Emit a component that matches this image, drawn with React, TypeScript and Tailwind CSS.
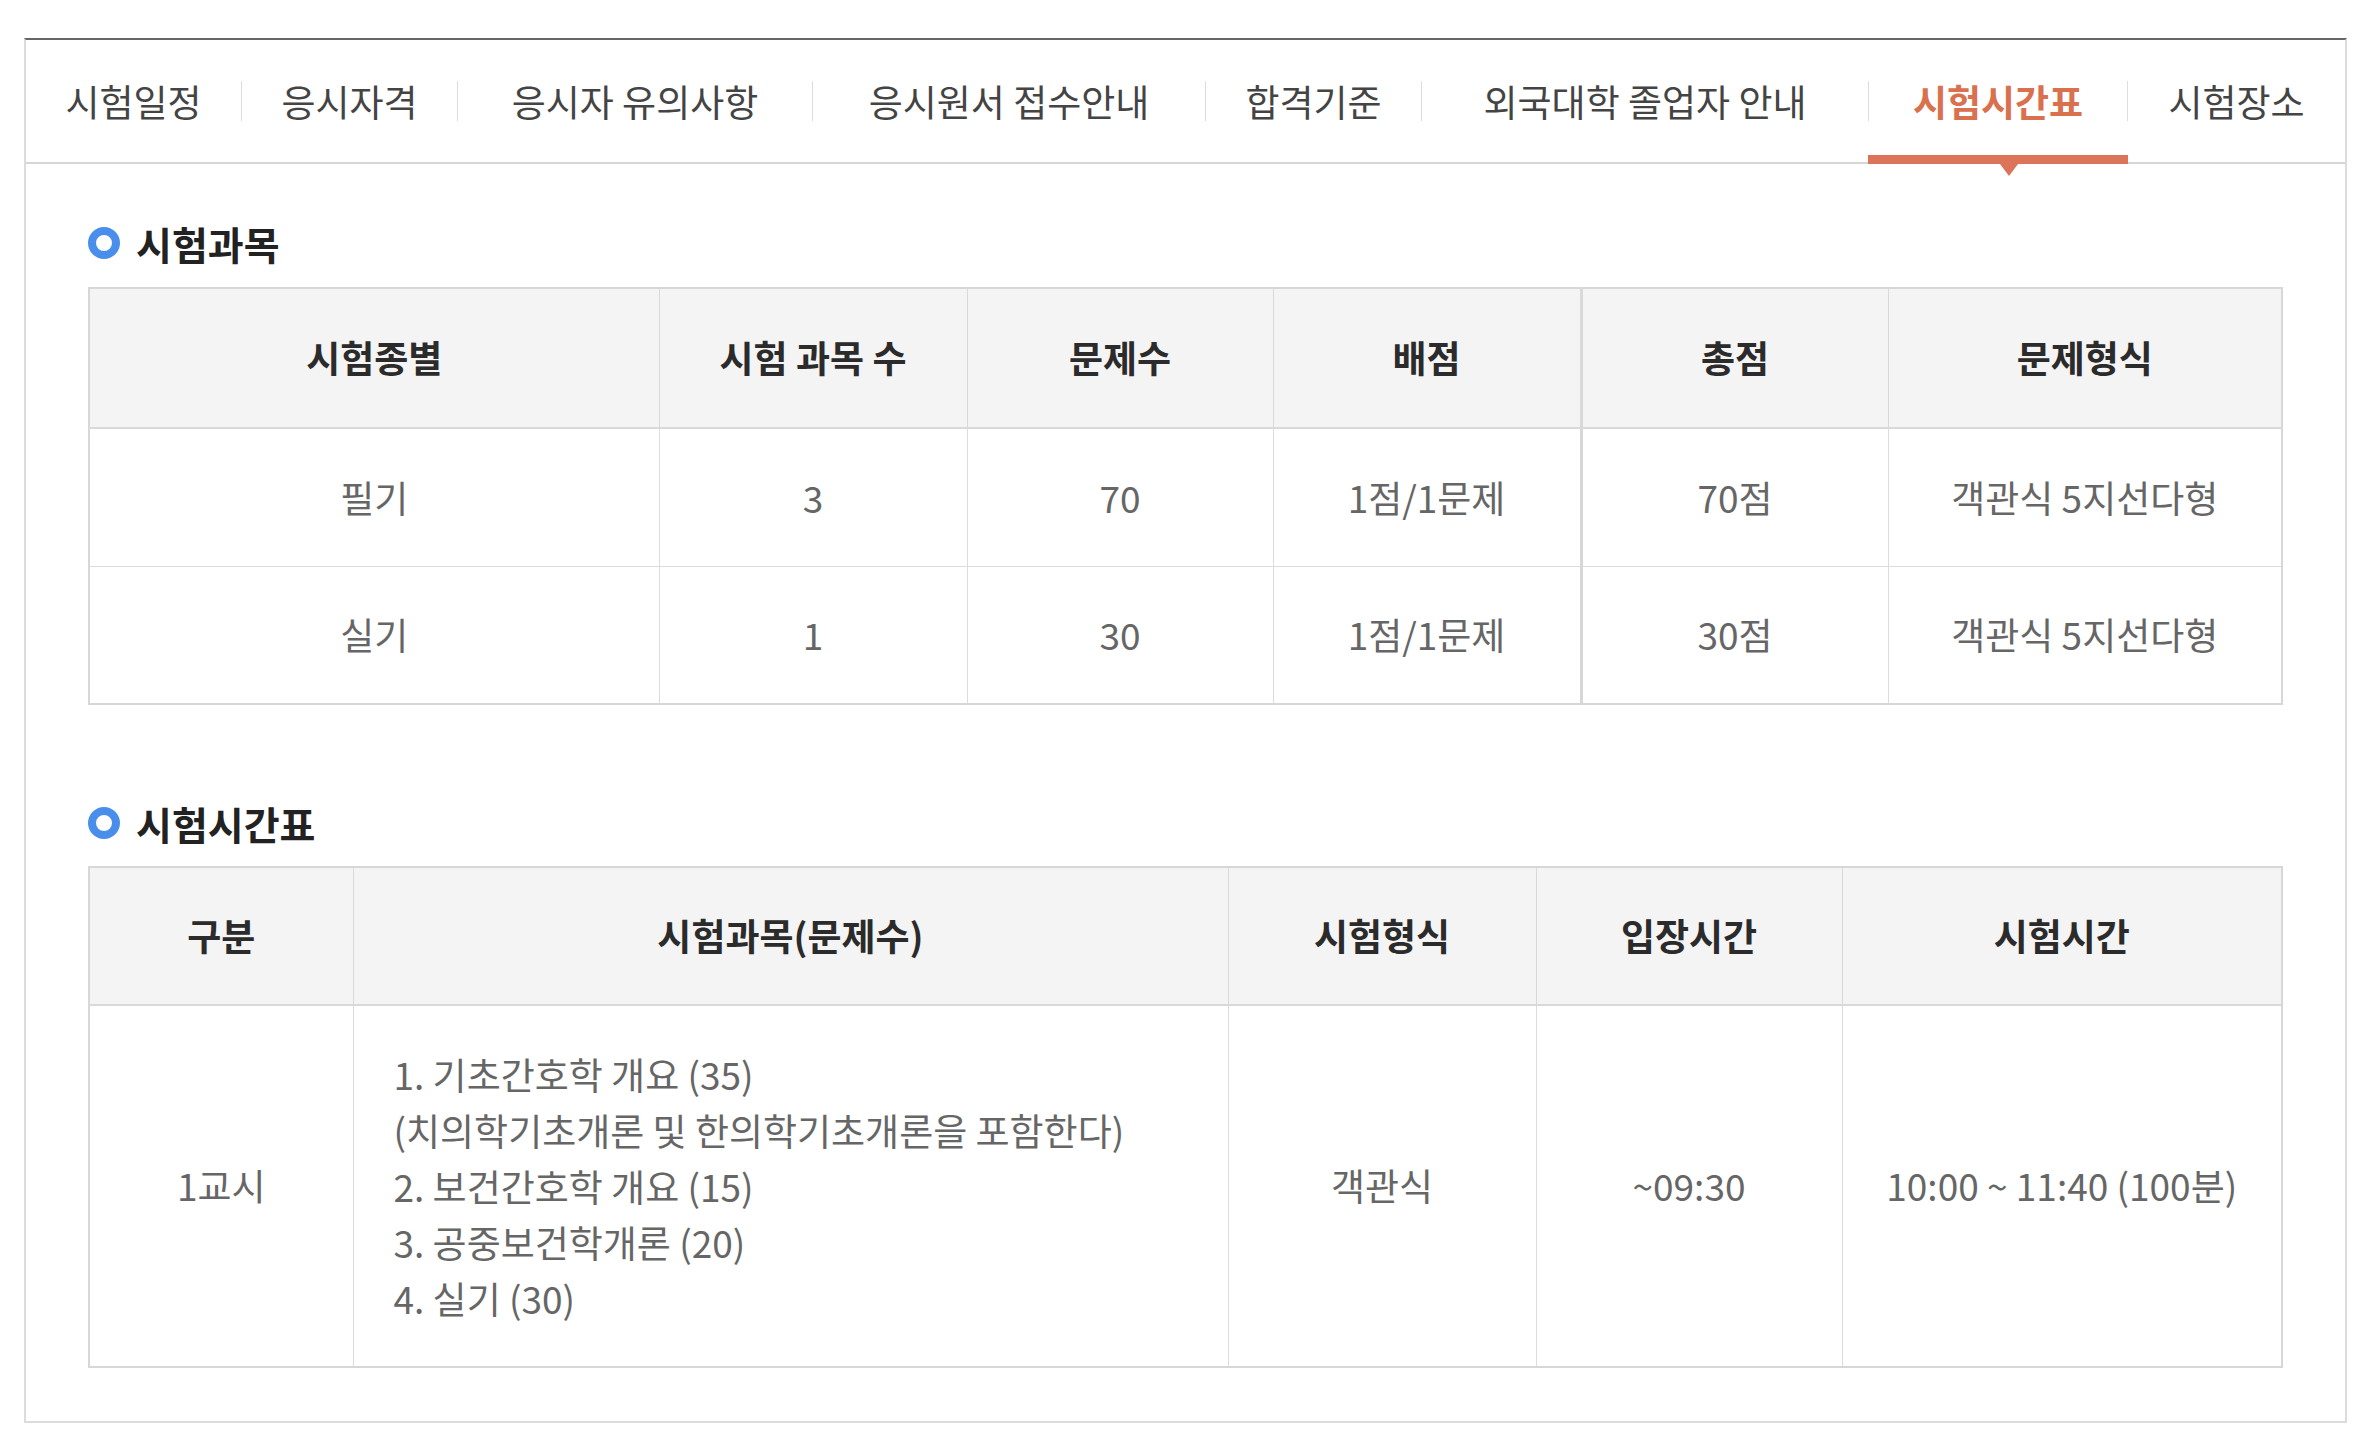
import type { ReactNode } from 'react';

const tabs = [
  { label: '시험일정', w: 'w-[215px]' },
  { label: '응시자격', w: 'w-[215px]' },
  { label: '응시자 유의사항', w: 'w-[354px]' },
  { label: '응시원서 접수안내', w: 'w-[392px]' },
  { label: '합격기준', w: 'w-[215px]' },
  { label: '외국대학 졸업자 안내', w: 'w-[446px]' },
  { label: '시험시간표', w: 'w-[258px]', active: true },
  { label: '시험장소', w: 'flex-1' },
];

const subjectRows = [
  { type: '필기', count: '3', questions: '70', score: '1점/1문제', total: '70점', format: '객관식 5지선다형' },
  { type: '실기', count: '1', questions: '30', score: '1점/1문제', total: '30점', format: '객관식 5지선다형' },
];

function SectionTitle({ children, className = '' }: { children: ReactNode; className?: string }) {
  return (
    <div className={`flex items-center gap-[16px] h-[38px] ${className}`}>
      <span className="w-[32px] h-[32px] shrink-0 rounded-full border-[8px] border-[#4a8eec]" />
      <h3 className="text-[39px] leading-none font-bold text-[#222]">{children}</h3>
    </div>
  );
}

export default function App() {
  return (
    <div className="font-['Noto_Sans_CJK_KR','Noto_Sans',sans-serif] bg-white pt-[38px] pl-[24px] pb-[15px]">
      <div className="w-[2323px] border-t-2 border-t-[#666] border-x-2 border-b-2 border-x-[#dcdcdc] border-b-[#dcdcdc]">
        {/* Tabs */}
        <div className="flex items-center h-[124px] border-b-2 border-[#d6d6d6]">
          {tabs.map((tab, i) => (
            <div key={tab.label} className={`flex items-center h-full ${tab.w === 'flex-1' ? 'flex-1' : ''}`}>
              {i > 0 && <span className="w-px h-[40px] bg-[#dddddd] shrink-0" />}
              <div className={`relative flex items-center justify-center h-full ${tab.w === 'flex-1' ? 'flex-1' : tab.w}`}>
                <span
                  className={`text-[37px] leading-none whitespace-nowrap ${
                    tab.active ? 'font-bold text-[#d9714f]' : 'text-[#444]'
                  }`}
                >
                  {tab.label}
                </span>
                {tab.active && (
                  <span className="absolute left-[-1px] right-[-1px] bottom-[-2px] h-[9px] bg-[#dc7459]">
                    <span className="absolute top-full left-[calc(50%+11px)] -translate-x-1/2 w-0 h-0 border-x-[9px] border-x-transparent border-t-[12px] border-t-[#dc7459]" />
                  </span>
                )}
              </div>
            </div>
          ))}
        </div>

        <div className="pl-[62px] pb-[53px]">
          {/* 시험과목 */}
          <SectionTitle className="mt-[60px]">시험과목</SectionTitle>
          <table className="mt-[25px] w-[2193px] table-fixed border-collapse border-2 border-[#d7d7d7] text-[37px]">
            <colgroup>
              <col className="w-[570px]" />
              <col className="w-[308px]" />
              <col className="w-[306px]" />
              <col className="w-[308px]" />
              <col className="w-[307px]" />
              <col className="w-[394px]" />
            </colgroup>
            <thead>
              <tr className="h-[140px] bg-[#f4f4f4] text-[#2b2b2b]">
                <th className="border border-[#d9d9d9] border-b-2 font-bold">시험종별</th>
                <th className="border border-[#d9d9d9] border-b-2 font-bold">시험 과목 수</th>
                <th className="border border-[#d9d9d9] border-b-2 font-bold">문제수</th>
                <th className="border border-[#d9d9d9] border-b-2 font-bold">배점</th>
                <th className="border border-[#d9d9d9] border-b-2 border-l-[3px] font-bold">총점</th>
                <th className="border border-[#d9d9d9] border-b-2 font-bold">문제형식</th>
              </tr>
            </thead>
            <tbody className="text-[#666] text-center">
              {subjectRows.map((row) => (
                <tr key={row.type} className="h-[138px]">
                  <td className="border border-[#dcdcdc]">{row.type}</td>
                  <td className="border border-[#dcdcdc]">{row.count}</td>
                  <td className="border border-[#dcdcdc]">{row.questions}</td>
                  <td className="border border-[#dcdcdc]">{row.score}</td>
                  <td className="border border-[#dcdcdc] border-l-[3px] border-l-[#d7d7d7]">{row.total}</td>
                  <td className="border border-[#dcdcdc]">{row.format}</td>
                </tr>
              ))}
            </tbody>
          </table>

          {/* 시험시간표 */}
          <SectionTitle className="mt-[99px]">시험시간표</SectionTitle>
          <table className="mt-[24px] w-[2193px] table-fixed border-collapse border-2 border-[#d7d7d7] text-[37px]">
            <colgroup>
              <col className="w-[264px]" />
              <col className="w-[875px]" />
              <col className="w-[308px]" />
              <col className="w-[306px]" />
              <col className="w-[440px]" />
            </colgroup>
            <thead>
              <tr className="h-[138px] bg-[#f4f4f4] text-[#2b2b2b]">
                <th className="border border-[#d9d9d9] border-b-2 font-bold">구분</th>
                <th className="border border-[#d9d9d9] border-b-2 font-bold">시험과목(문제수)</th>
                <th className="border border-[#d9d9d9] border-b-2 font-bold">시험형식</th>
                <th className="border border-[#d9d9d9] border-b-2 font-bold">입장시간</th>
                <th className="border border-[#d9d9d9] border-b-2 font-bold">시험시간</th>
              </tr>
            </thead>
            <tbody className="text-[#666] text-center">
              <tr className="h-[362px]">
                <td className="border border-[#dcdcdc]">1교시</td>
                <td className="border border-[#dcdcdc] px-[40px] text-left leading-[56px]">
                  <p>1. 기초간호학 개요 (35)</p>
                  <p>(치의학기초개론 및 한의학기초개론을 포함한다)</p>
                  <p>2. 보건간호학 개요 (15)</p>
                  <p>3. 공중보건학개론 (20)</p>
                  <p>4. 실기 (30)</p>
                </td>
                <td className="border border-[#dcdcdc]">객관식</td>
                <td className="border border-[#dcdcdc]">~09:30</td>
                <td className="border border-[#dcdcdc]">10:00 ~ 11:40 (100분)</td>
              </tr>
            </tbody>
          </table>
        </div>
      </div>
    </div>
  );
}
